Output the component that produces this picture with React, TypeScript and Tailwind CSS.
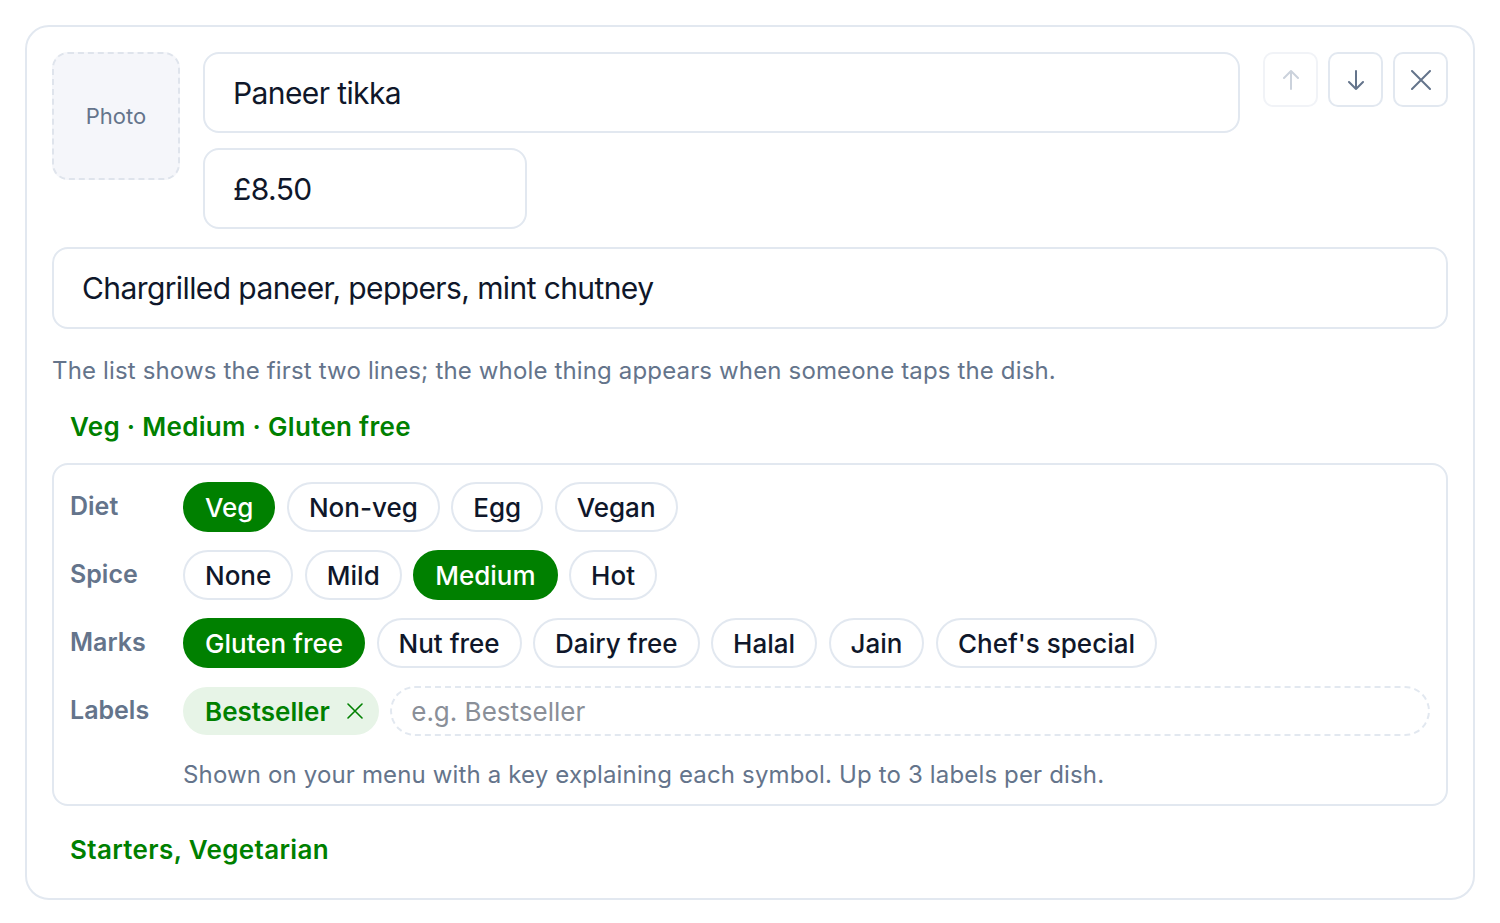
const diet = ["Veg", "Non-veg", "Egg", "Vegan"]
const spice = ["None", "Mild", "Medium", "Hot"]
const marks = ["Gluten free", "Nut free", "Dairy free", "Halal", "Jain", "Chef's special"]

const Chip = ({ label, on }: { label: string; on?: boolean }) => (
    <button
        className={
            on
                ? "h-[50px] px-[20px] rounded-full border-2 border-[#008000] bg-[#008000] text-white text-[26px] font-medium"
                : "h-[50px] px-[20px] rounded-full border-2 border-[#e2e8f0] bg-white text-[#0f172a] text-[26px] font-medium"
        }
    >
        {label}
    </button>
)

const Row = ({ name, children }: { name: string; children: React.ReactNode }) => (
    <div className="flex items-center">
        <div className="w-[113px] shrink-0 text-[25px] font-semibold text-[#64748b]">{name}</div>
        <div className="flex flex-1 items-center gap-[11.5px]">{children}</div>
    </div>
)

export default function App() {
    return (
        <div className="w-full min-h-[923px] bg-white p-[25px] font-['Inter',sans-serif]">
            <div className="rounded-[24px] border-2 border-[#e2e8f0] px-[25px] pt-[25px] pb-[30px]">
                <div className="flex gap-[23px]">
                    <div className="w-[128px] h-[128px] shrink-0 rounded-[16px] border-2 border-dashed border-[#dfe4ec] bg-[#f5f6fa] flex items-center justify-center text-[22px] text-[#64748b]">
                        Photo
                    </div>
                    <div className="flex flex-1 flex-col gap-[15px]">
                        <input
                            readOnly
                            defaultValue="Paneer tikka"
                            className="h-[81px] w-full rounded-[16px] border-2 border-[#e2e8f0] px-[28px] text-[30px] tracking-[-0.6px] text-[#0f172a] outline-none"
                        />
                        <input
                            readOnly
                            defaultValue="£8.50"
                            className="h-[81px] w-[324px] rounded-[16px] border-2 border-[#e2e8f0] px-[28px] text-[30px] tracking-[-0.6px] text-[#0f172a] outline-none"
                        />
                    </div>
                    <div className="flex gap-[10px] items-start">
                        <button className="w-[55px] h-[55px] rounded-[10px] border-2 border-[#f1f3f7] flex items-center justify-center text-[#cbd2dc]">
                            <svg width="18" height="20" viewBox="0 0 18 20" fill="none" stroke="currentColor" strokeWidth="2" strokeLinecap="round" strokeLinejoin="round">
                                <path d="M9 19V1M2 8l7-7 7 7" />
                            </svg>
                        </button>
                        <button className="w-[55px] h-[55px] rounded-[10px] border-2 border-[#e2e8f0] flex items-center justify-center text-[#64748b]">
                            <svg width="18" height="20" viewBox="0 0 18 20" fill="none" stroke="currentColor" strokeWidth="2" strokeLinecap="round" strokeLinejoin="round">
                                <path d="M9 1v18M2 12l7 7 7-7" />
                            </svg>
                        </button>
                        <button className="w-[55px] h-[55px] rounded-[10px] border-2 border-[#e2e8f0] flex items-center justify-center text-[#64748b]">
                            <svg width="20" height="20" viewBox="0 0 20 20" fill="none" stroke="currentColor" strokeWidth="2" strokeLinecap="round">
                                <path d="M1 1l18 18M19 1L1 19" />
                            </svg>
                        </button>
                    </div>
                </div>

                <input
                    readOnly
                    defaultValue="Chargrilled paneer, peppers, mint chutney"
                    className="mt-[18px] h-[82px] w-full rounded-[16px] border-2 border-[#e2e8f0] px-[28px] text-[30px] tracking-[-0.6px] text-[#0f172a] outline-none"
                />

                <p className="mt-[24px] text-[24px] leading-[36px] tracking-[0.15px] text-[#64748b]">
                    The list shows the first two lines; the whole thing appears when someone taps the dish.
                </p>

                <p className="mt-[20px] pl-[18px] text-[26px] leading-[36px] tracking-[0.3px] font-semibold text-[#008000]">
                    Veg · Medium · Gluten free
                </p>

                <div className="mt-[18px] rounded-[16px] border-2 border-[#e2e8f0] px-[16px] pt-[17px] pb-[13px] flex flex-col gap-[18px]">
                    <Row name="Diet">
                        {diet.map(d => <Chip key={d} label={d} on={d === "Veg"} />)}
                    </Row>
                    <Row name="Spice">
                        {spice.map(d => <Chip key={d} label={d} on={d === "Medium"} />)}
                    </Row>
                    <Row name="Marks">
                        {marks.map(d => <Chip key={d} label={d} on={d === "Gluten free"} />)}
                    </Row>
                    <div>
                        <Row name="Labels">
                            <span className="h-[48px] pl-[22px] pr-[16px] rounded-full bg-[#e7f4e7] flex items-center gap-[17px] text-[26px] font-semibold text-[#008000]">
                                Bestseller
                                <svg width="16" height="16" viewBox="0 0 16 16" fill="none" stroke="currentColor" strokeWidth="1.6" strokeLinecap="round">
                                    <path d="M1 1l14 14M15 1L1 15" />
                                </svg>
                            </span>
                            <input
                                readOnly
                                placeholder="e.g. Bestseller"
                                className="h-[50px] flex-1 rounded-full border-2 border-dashed border-[#e2e8f0] px-[19px] text-[26px] text-[#0f172a] placeholder:text-[#8a8f98] outline-none"
                            />
                        </Row>
                        <p className="mt-[23px] pl-[113px] text-[24px] leading-[32px] tracking-[0.15px] text-[#64748b]">
                            Shown on your menu with a key explaining each symbol. Up to 3 labels per dish.
                        </p>
                    </div>
                </div>

                <p className="mt-[26px] pl-[18px] text-[26px] leading-[36px] tracking-[0.35px] font-semibold text-[#008000]">
                    Starters, Vegetarian
                </p>
            </div>
        </div>
    )
}
